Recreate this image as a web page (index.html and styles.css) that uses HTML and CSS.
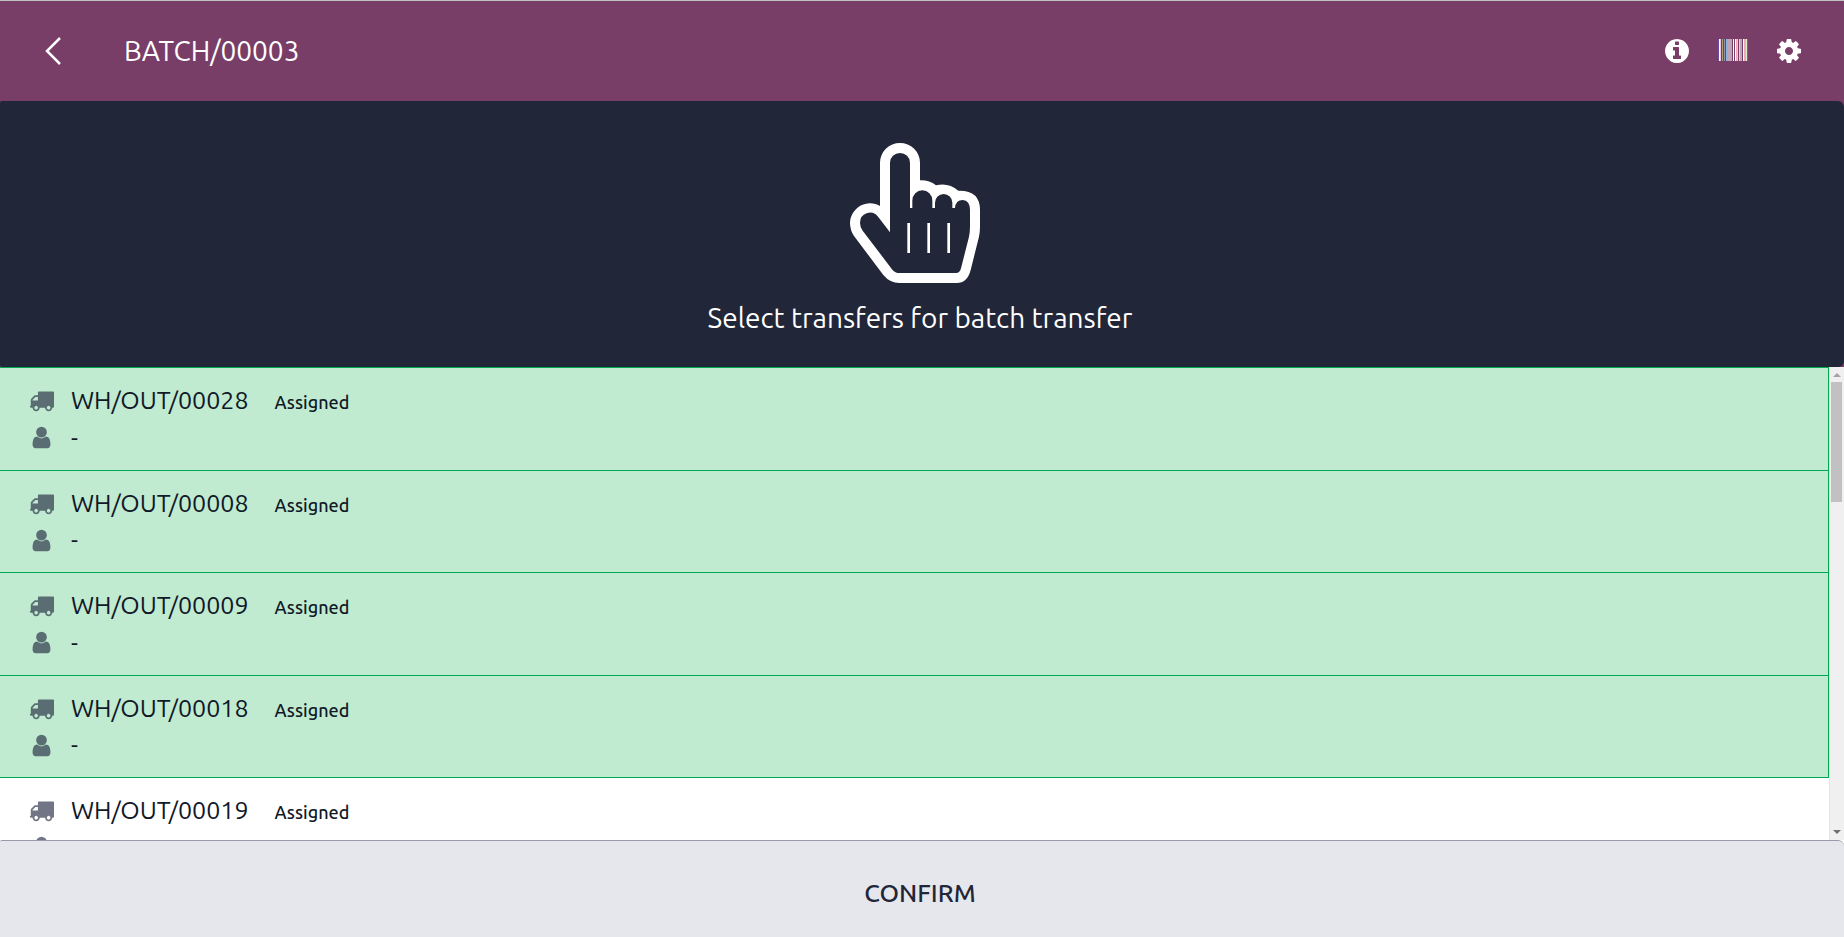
FILE: index.html
```html
<!DOCTYPE html>
<html lang="en">
<head>
<meta charset="utf-8">
<title>BATCH/00003</title>
<link rel="stylesheet" href="styles.css">
</head>
<body>
<svg class="sprite" aria-hidden="true">
  <symbol id="truck" viewBox="0 0 1792 1792"><path d="M640 1408q0-52-38-90t-90-38-90 38-38 90 38 90 90 38 90-38 38-90zm-384-512h384v-256h-158q-13 0-22 9l-195 195q-9 9-9 22v30zm1280 512q0-52-38-90t-90-38-90 38-38 90 38 90 90 38 90-38 38-90zm256-1088v1024q0 15-4 26.5t-13.500 18.500-16.500 11.500-23.500 6-22.500 2-25.500 0-22.500-.5q0 106-75 181t-181 75-181-75-75-181h-384q0 106-75 181t-181 75-181-75-75-181h-64q-3 0-22.500.5t-25.500 0-22.500-2-23.500-6-16.500-11.500-13.500-18.500-4-26.500q0-26 19-45t45-19v-320q0-8-.5-35t0-38 2.500-34.500 6.500-37 14-30.500 22.500-30l198-198q19-19 50.500-32t58.500-13h160v-192q0-26 19-45t45-19h1024q26 0 45 19t19 45z"/></symbol>
  <symbol id="user" viewBox="0 0 1792 1792"><path d="M1536 1399q0 109-62.500 187t-150.500 78h-854q-88 0-150.500-78t-62.500-187q0-85 8.500-160.500t31.500-152 58.500-131 94-89 134.500-34.500q131 128 313 128t313-128q76 0 134.500 34.500t94 89 58.500 131 31.500 152 8.500 160.500zm-256-887q0 159-112.500 271.500t-271.500 112.500-271.500-112.500-112.500-271.500 112.500-271.500 271.500-112.500 271.500 112.500 112.500 271.500z"/></symbol>
</svg>
<div class="app">
  <header class="topbar">
    <button class="icon-btn back" aria-label="Back"><svg width="18" height="30" viewBox="0 0 18 30"><path d="M16 2 3 15l13 13" fill="none" stroke="currentColor" stroke-width="2.500"/></svg></button>
    <h1 class="title">BATCH/00003</h1>
    <div class="actions">
      <button class="icon-btn" aria-label="Information"><svg width="28" height="28" viewBox="0 0 1792 1792"><path fill="currentColor" d="M1152 1376v-160q0-14-9-23t-23-9h-96v-512q0-14-9-23t-23-9h-320q-14 0-23 9t-9 23v160q0 14 9 23t23 9h96v320h-96q-14 0-23 9t-9 23v160q0 14 9 23t23 9h448q14 0 23-9t9-23zm-128-896v-160q0-14-9-23t-23-9h-192q-14 0-23 9t-9 23v160q0 14 9 23t23 9h192q14 0 23-9t9-23zm640 416q0 209-103 385.500t-279.500 279.500-385.500 103-385.500-103-279.500-279.500-103-385.500 103-385.500 279.500-279.500 385.500-103 385.500 103 279.500 279.500 103 385.500z"/></svg></button>
      <button class="icon-btn" aria-label="Print barcodes"><svg width="30" height="24" viewBox="0 0 30 24" shape-rendering="crispEdges"><path fill="#6c4aa4" d="M0 0h1v22H0z"/><path fill="#fff" d="M1 0h1v22H1zM15 0h1v22h-1zM17 0h1v22h-1zM25 0h1v22h-1z"/><path fill="#e8c8e0" d="M2 0h1v22H2zM19 0h1v22h-1zM21 0h1v22h-1z"/><path fill="#b39a72" d="M4 0h1v22H4z"/><path fill="#8f96a4" d="M6 0h1v22H6z"/><path fill="#8fb0e0" d="M8 0h2v22H8zM13 0h1v22h-1z"/><path fill="#c0a5b8" d="M10 0h3v22h-3zM22 0h2v22h-2z"/><path fill="#f0a8b8" d="M18 0h1v22h-1zM26 0h2v22h-2z"/><path fill="#d8f0c8" d="M28 0h1v22h-1z"/><path fill="#a85a50" d="M29 0h1v22h-1z"/></svg></button>
      <button class="icon-btn" aria-label="Settings"><svg width="28" height="28" viewBox="0 0 1792 1792"><path fill="currentColor" d="M1152 896q0-106-75-181t-181-75-181 75-75 181 75 181 181 75 181-75 75-181zm512-109v222q0 12-8 23t-20 13l-185 28q-19 54-39 91 35 50 107 138 10 12 10 25t-9 23q-27 37-99 108t-94 71q-12 0-26-9l-138-108q-44 23-91 38-16 136-29 186-7 28-36 28h-222q-14 0-24.500-8.500t-11.500-21.500l-28-184q-49-16-90-37l-141 107q-10 9-25 9-14 0-25-11-126-114-165-168-7-10-7-23 0-12 8-23 15-21 51-66.500t54-70.500q-27-50-41-99l-183-27q-13-2-21-12.500t-8-23.500v-222q0-12 8-23t19-13l186-28q14-46 39-92-40-57-107-138-10-12-10-24 0-10 9-23 26-36 98.500-107.500t94.500-71.500q13 0 26 10l138 107q44-23 91-38 16-136 29-186 7-28 36-28h222q14 0 24.500 8.500t11.500 21.500l28 184q49 16 90 37l142-107q9-9 24-9 13 0 25 10 129 119 165 170 7 8 7 22 0 12-8 23-15 21-51 66.500t-54 70.500q26 50 41 98l183 28q13 2 21 12.500t8 23.500z"/></svg></button>
    </div>
  </header>

  <section class="banner">
    <svg width="140" height="140" viewBox="480 39 420 420" aria-hidden="true">
      <path fill="#fff" fill-rule="evenodd" d="M570 228V98A60 59 0 0 1 690 98V151Q718 150 738 166Q775 156 805 182Q870 180 870 240V290Q870 305 867 320L842 420Q832 459 800 459H628Q600 459 580 435L492 318Q480 300 480 278A60 60 0 0 1 570 228ZM600 307V98A30 29 0 0 1 660 98V234H667V212A30 31 0 0 1 727 212V234H735V218A26 26 0 0 1 787 218V234H795Q797 210 818 210Q840 212 840 240V290Q840 305 837 320L813 415Q810 429 798 429H628Q616 429 607 419L518 302Q510 292 510 278A30 30 0 0 1 563 259Z"/>
      <path fill="#fff" d="M652 279h8v90h-8zM712 279h8v90h-8zM772 279h8v90h-8z"/>
    </svg>
    <p class="banner-text">Select transfers for batch transfer</p>
  </section>

  <main class="list">
    <ul class="rows">
      <li class="row selected"><svg class="ico"><use href="#truck"/></svg><div class="line"><span class="name">WH/OUT/00028</span><span class="state">Assigned</span></div><svg class="ico"><use href="#user"/></svg><span class="partner">-</span></li>
      <li class="row selected"><svg class="ico"><use href="#truck"/></svg><div class="line"><span class="name">WH/OUT/00008</span><span class="state">Assigned</span></div><svg class="ico"><use href="#user"/></svg><span class="partner">-</span></li>
      <li class="row selected"><svg class="ico"><use href="#truck"/></svg><div class="line"><span class="name">WH/OUT/00009</span><span class="state">Assigned</span></div><svg class="ico"><use href="#user"/></svg><span class="partner">-</span></li>
      <li class="row selected"><svg class="ico"><use href="#truck"/></svg><div class="line"><span class="name">WH/OUT/00018</span><span class="state">Assigned</span></div><svg class="ico"><use href="#user"/></svg><span class="partner">-</span></li>
      <li class="row"><svg class="ico"><use href="#truck"/></svg><div class="line"><span class="name">WH/OUT/00019</span><span class="state">Assigned</span></div><svg class="ico"><use href="#user"/></svg><span class="partner">-</span></li>
    </ul>
    <div class="scrollbar" aria-hidden="true">
      <svg class="arrow up" width="8" height="4" viewBox="0 0 8 4"><path d="M0 4 4 0l4 4z"/></svg>
      <div class="track"><div class="thumb"></div></div>
      <svg class="arrow down" width="8" height="4" viewBox="0 0 8 4"><path d="M0 0h8L4 4z"/></svg>
    </div>
  </main>

  <footer class="footer">
    <button class="confirm">CONFIRM</button>
  </footer>
</div>
</body>
</html>
```
FILE: styles.css
```css
* { box-sizing: border-box; }
body {
  margin: 0;
  font-family: Ubuntu, "Noto Sans", sans-serif;
  color: #111827;
}
button { font: inherit; border: 0; cursor: pointer; }
.sprite { display: none; }
.app {
  display: flex;
  flex-direction: column;
  height: 100vh;
  background: #783e67;
}
.topbar {
  display: flex;
  align-items: center;
  flex: none;
  padding: 30px 41px 30px 44px;
  border-top: 1px solid #c0c0c0;
  color: #fff;
}
.icon-btn {
  display: flex;
  padding: 0;
  background: none;
  color: inherit;
}
.title {
  margin: 0 0 0 62px;
  font-size: 28px;
  font-weight: 400;
  line-height: 40px;
}
.actions {
  display: flex;
  align-items: center;
  gap: 27px;
  margin-left: auto;
}
.banner {
  display: flex;
  flex-direction: column;
  align-items: center;
  flex: none;
  padding: 42px 4px 28px 0;
  border-radius: 2px 6px 6px 2px;
  background: #212638;
  color: #fff;
}
.banner-text {
  margin: 14px 0 0;
  font-size: 28px;
  line-height: 42px;
}
.list {
  display: flex;
  flex: 1;
  min-height: 0;
  background: #fff;
}
.rows {
  flex: 1;
  margin: 0;
  padding: 0;
  overflow: hidden auto;
  list-style: none;
}
.scrollbar {
  display: flex;
  flex-direction: column;
  align-items: center;
  width: 15px;
  padding-right: 1px;
  border-left: 1px solid #e4e4e4;
  background: #f0f0f0;
}
.arrow { flex: none; }
.up { margin: 6px 0 5px; fill: #a3a3a3; }
.down { margin: 5px 0 6px; fill: #707070; }
.track { flex: 1; }
.thumb {
  width: 11px;
  height: 27%;
  background: #c1c1c1;
}
.row {
  display: grid;
  grid-template-columns: 25px 1fr;
  column-gap: 17px;
  align-items: center;
  padding: 14px 29px;
  border-bottom: 1px solid #c9ccd2;
}
.row.selected {
  border-right: 1px solid #00a84f;
  border-bottom-color: #00a84f;
  background: #c0ebd1;
}
.row:first-child { border-top: 1px solid #00a84f; }
.ico {
  width: 25px;
  height: 25px;
  fill: #151a35;
  opacity: 0.6;
}
.line { display: flex; align-items: baseline; }
.name { font-size: 25px; line-height: 1.5; }
.state {
  margin-left: 26px;
  font-size: 18px;
  font-weight: 500;
}
.partner { font-size: 24px; line-height: 1.5; }
.footer {
  display: flex;
  flex: none;
  background: #fff;
}
.confirm {
  flex: 1;
  padding: 32px 4px 24px 0;
  border-top: 1px solid #9a9ba8;
  border-radius: 2px 6px 0 0;
  background: #e6e7ec;
  color: #212638;
  font-size: 25px;
  font-weight: 500;
  line-height: 40px;
}
```
